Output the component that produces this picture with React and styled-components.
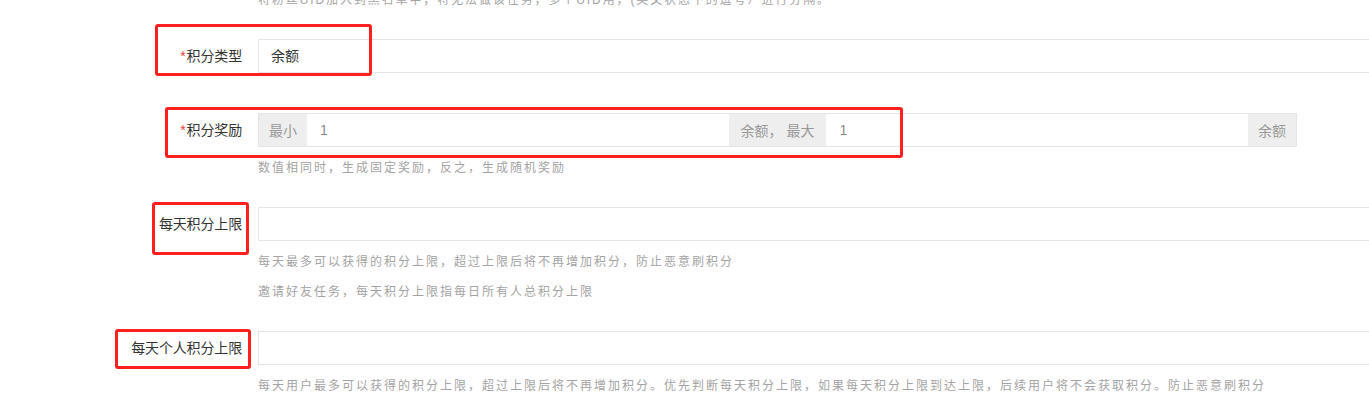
import React from "react";
import styled, { createGlobalStyle } from "styled-components";

const Global = createGlobalStyle`
  html, body {
    margin: 0;
    padding: 0;
    background: #fff;
    overflow: hidden;
  }
  body {
    font-family: "Liberation Sans", "Noto Sans CJK SC", sans-serif;
    color: #333;
  }
`;

const Page = styled.div`
  position: relative;
  margin-top: -10px;
  width: 1369px;
  height: 410px;
`;

const TopHelp = styled.p`
  margin: 0 0 0 258px;
  font-size: 12px;
  line-height: 20px;
  letter-spacing: 1.9px;
  color: #a3a3a3;
  white-space: nowrap;
`;

const FormGroup = styled.div`
  position: relative;
  display: grid;
  grid-template-columns: 258px 1fr;
  margin-top: ${(p) => p.$gap}px;
`;

const Label = styled.label`
  grid-column: 1;
  text-align: right;
  padding-right: 16px;
  font-size: 14px;
  line-height: 34px;
  letter-spacing: -0.15px;
  color: #333;
  white-space: nowrap;
`;

const Star = styled.span`
  color: #f0403d;
  margin-right: 1px;
`;

const Control = styled.div`
  grid-column: 2;
  display: flex;
  flex-direction: column;
`;

const Input = styled.div`
  box-sizing: border-box;
  width: 1200px;
  height: 34px;
  border: 1px solid #e6e6e6;
  padding: 0 12px;
  font-size: 14px;
  line-height: 32px;
  color: #333;
`;

const InputGroup = styled.div`
  box-sizing: border-box;
  display: flex;
  width: 1039px;
  height: 34px;
  border: 1px solid #e6e6e6;
`;

const Addon = styled.span`
  flex: none;
  display: flex;
  align-items: center;
  padding: 0 ${(p) => p.$pad}px;
  background: #eeeeee;
  color: #999;
  font-size: 14px;
  white-space: nowrap;
`;

const GroupField = styled.span`
  flex: 1;
  display: flex;
  align-items: center;
  padding: 0 13px;
  font-size: 14px;
  color: #8a8a8a;
  background: #fff;
`;

const Help = styled.p`
  margin: 11px 0 0;
  font-size: 12px;
  line-height: 20px;
  letter-spacing: 2px;
  color: #a3a3a3;
  white-space: nowrap;

  & + & {
    margin-top: 10px;
  }
`;

const Mark = styled.div`
  position: absolute;
  box-sizing: border-box;
  left: ${(p) => p.$x}px;
  top: ${(p) => p.$y}px;
  width: ${(p) => p.$w}px;
  height: ${(p) => p.$h}px;
  border: 3px solid #ff1f1f;
  border-radius: 3px;
  pointer-events: none;
`;

export default function App() {
  return (
    <>
      <Global />
      <Page>
        <TopHelp>将粉丝UID加入到黑名单中，将无法做该任务，多个UID用，(英文状态下的逗号）进行分隔。</TopHelp>

        <FormGroup $gap={29}>
          <Label>
            <Star>*</Star>积分类型
          </Label>
          <Control>
            <Input>余额</Input>
          </Control>
          <Mark $x={155} $y={-15} $w={217} $h={52} />
        </FormGroup>

        <FormGroup $gap={40}>
          <Label>
            <Star>*</Star>积分奖励
          </Label>
          <Control>
            <InputGroup>
              <Addon $pad={10}>最小</Addon>
              <GroupField>1</GroupField>
              <Addon $pad={12}>余额， 最大</Addon>
              <GroupField>1</GroupField>
              <Addon $pad={10}>余额</Addon>
            </InputGroup>
            <Help>数值相同时，生成固定奖励，反之，生成随机奖励</Help>
          </Control>
          <Mark $x={165} $y={-6} $w={738} $h={51} />
        </FormGroup>

        <FormGroup $gap={29}>
          <Label>每天积分上限</Label>
          <Control>
            <Input />
            <Help>每天最多可以获得的积分上限，超过上限后将不再增加积分，防止恶意刷积分</Help>
            <Help>邀请好友任务，每天积分上限指每日所有人总积分上限</Help>
          </Control>
          <Mark $x={152} $y={-5} $w={97} $h={53} />
        </FormGroup>

        <FormGroup $gap={29}>
          <Label>每天个人积分上限</Label>
          <Control>
            <Input />
            <Help>每天用户最多可以获得的积分上限，超过上限后将不再增加积分。优先判断每天积分上限，如果每天积分上限到达上限，后续用户将不会获取积分。防止恶意刷积分</Help>
          </Control>
          <Mark $x={115} $y={-2} $w={136} $h={40} />
        </FormGroup>
      </Page>
    </>
  );
}
